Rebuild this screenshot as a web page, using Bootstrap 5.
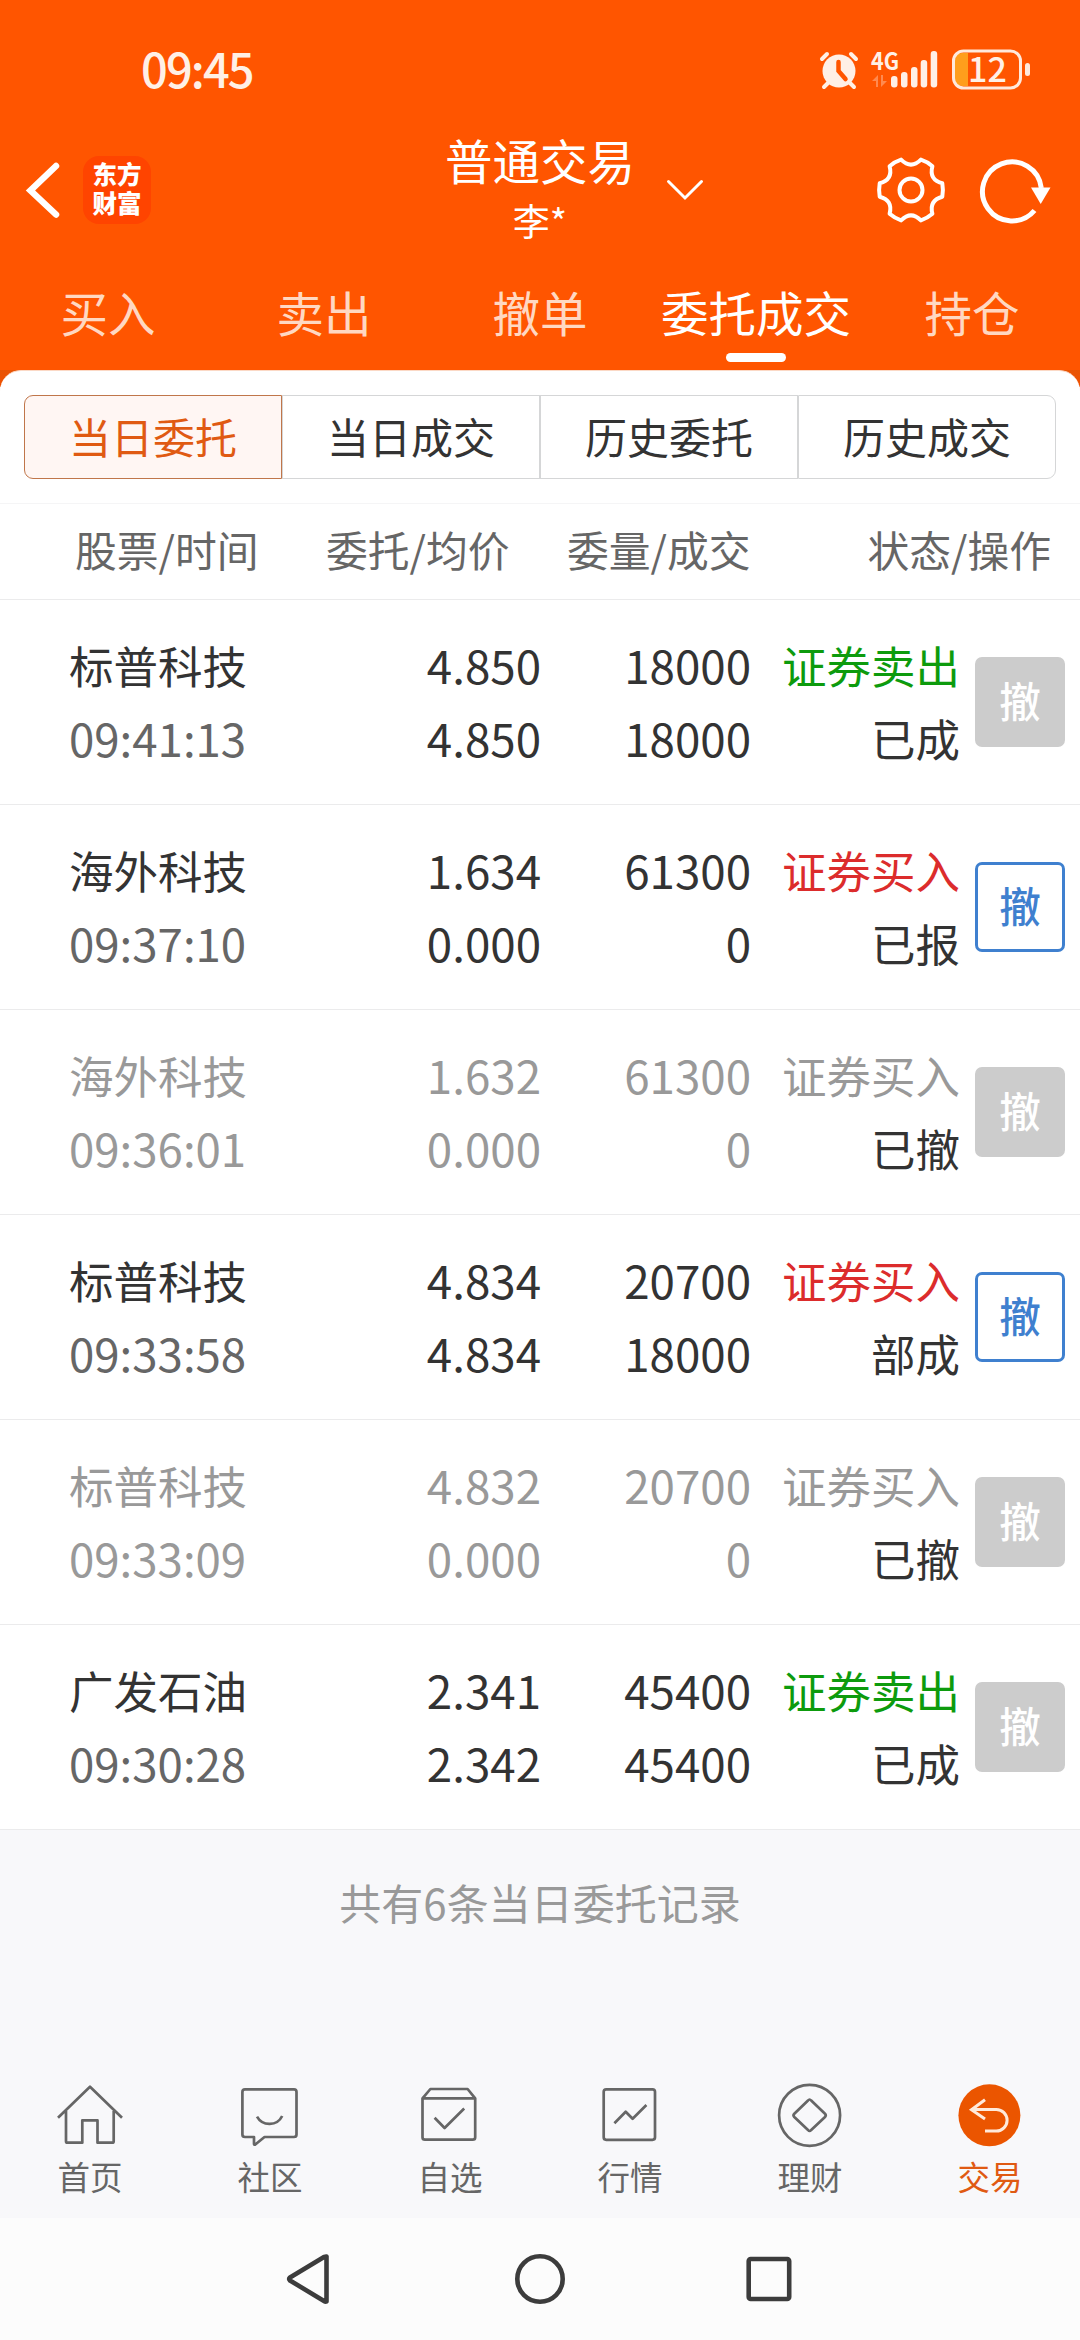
<!DOCTYPE html>
<html lang="zh-CN">
<head>
<meta charset="utf-8">
<meta name="viewport" content="width=device-width, initial-scale=1">
<title>普通交易</title>
<link href="https://cdn.jsdelivr.net/npm/bootstrap@5.3.0/dist/css/bootstrap.min.css" rel="stylesheet">
<style>
  body { width: 1080px; height: 2340px; overflow: hidden; background: #f8f8fa; color: #333;
         font-family: "Noto Sans CJK SC", "Noto Sans", sans-serif; }
  svg { display: block; flex: none; overflow: visible; }
  .app-head { background: #ff5500; height: 370px; color: #fff; }
  .status-bar { height: 140px; padding: 0 49px 0 141px; color: #fff0e6; }
  .clock { font-size: 47px; font-weight: 500; letter-spacing: -1.9px; line-height: 68px; margin-top: -5px; }
  .title-bar { height: 110px; }
  .head-left { width: 440px; padding: 0 0 11px 27px; gap: 24px; }
  .brand { width: 68px; height: 68px; border-radius: 16px; background: #ff4400; font-size: 24.5px;
           line-height: 29px; font-weight: 900; padding-top: 3px; }
  .head-mid { width: 200px; }
  .acct-title { font-size: 47.5px; line-height: 66px; margin-top: -13px; }
  .acct-user { font-size: 37px; line-height: 52px; padding-top: 1px; }
  .head-right { width: 440px; padding: 0 28px 11px 26px; }
  .main-tabs { height: 120px; }
  .main-tabs .nav-link { width: 216px; padding: 0; height: 120px; line-height: 124px; font-size: 47.5px;
           color: #ffd8c2; position: relative; text-align: center; }
  .main-tabs .nav-link.active { color: #fff; }
  .main-tabs .nav-link.active::after { content: ""; position: absolute; left: 78px; top: 103px; width: 60px;
           height: 9px; border-radius: 5px; background: #fff; }
  .sheet-wrap { background: linear-gradient(#e85404, #f05000 17px, #fff 17px); }
  .sheet { background: #fff; border-radius: 21px 21px 0 0; border-top: 1px solid #fbd9c6; }
  .seg { padding: 24px 24px 0; height: 132px; }
  .seg .btn { height: 84px; padding: 0; font-size: 42px; line-height: 76px; padding-bottom: 3px; color: #333; background: #fff;
           border: 1px solid #d5d6d7; border-radius: 0; flex: 1 1 0; }
  .seg .btn:first-child { border-radius: 9px 0 0 9px; }
  .seg .btn:last-child { border-radius: 0 9px 9px 0; }
  .seg .btn.active { background: #fff6f3; color: #e05a12; border-color: #c0764a; }
  .cols-head { height: 97px; border-top: 1px solid #f5f5f6; border-bottom: 1px solid #ebebec; font-size: 41.8px;
           color: #666; line-height: 91px; padding-left: 75px; }
  .h-a { width: 251px; } .h-b { width: 241px; } .h-c { width: 184px; }
  .h-d { width: 300px; }
  .order { height: 205px; border-bottom: 1px solid #ebebec; padding-left: 69px; background: #fff; }
  .order > div { line-height: 73px; font-size: 44.5px; padding-bottom: 3px; }
  .order .num { font-size: 45.7px; }
  .c-name { width: 260px; } .c-price { width: 212px; } .c-vol { width: 210px; } .c-stat { width: 209px; }
  .time-txt { color: #666; font-size: 45.6px; }
  .sell { color: #0d9b0d; } .buy { color: #dc2c2c; }
  .dimmed .c-name, .dimmed .time-txt, .dimmed .num, .dimmed .buy { color: #999; }
  .order .btn { width: 90px; height: 90px; margin-left: 15px; padding: 0 0 3px; border-radius: 7px; font-size: 41.5px;
           font-weight: 500; line-height: 77px; border: 3px solid #3f80cf; color: #3f80cf; background: #fff; }
  .order .btn.off { background: #ccc; border-color: #ccc; color: #fff; }
  .summary { color: #999; font-size: 42px; line-height: 60px; padding-top: 42px; height: 244px; }
  .tabbar { height: 145px; }
  .tabbar a { width: 180px; padding-top: 5px; color: #666; font-size: 32.5px; line-height: 49px; text-decoration: none; }
  .tabbar a.on { color: #e05a12; }
  .tabbar svg { fill: none; stroke: #666; stroke-width: 2.7; stroke-linejoin: round; }
  .sysbar { height: 122px; background: #fcfcfc; }
</style>
</head>
<body class="d-flex flex-column">
<header class="app-head">
  <div class="status-bar d-flex align-items-center justify-content-between">
    <span class="clock">09:45</span>
    <div class="d-flex align-items-center">
      <svg width="40" height="40" viewBox="0 0 40 40" fill="none" stroke="#fff0e6" stroke-linecap="round">
        <circle cx="20" cy="21" r="16.5" fill="#fff0e6" stroke="none"/>
        <path d="M3 9L8 4M37 9L32 4M9 33l-4 4M31 33l4 4" stroke-width="4"/>
        <path d="M19.500 12v9l7 8" stroke="#ff5500" stroke-width="4.500"/>
      </svg>
      <svg width="66" height="40" viewBox="0 0 66 40" style="margin-left:13px" fill="#fff0e6">
        <text x="-1" y="20" font-size="24" font-weight="700" font-family="Noto Sans CJK SC" textLength="28" lengthAdjust="spacingAndGlyphs">4G</text>
        <path d="M0 31l6-6v12H4v-6zM15 31l-6 6V25h2v6z" fill="#ff8a50"/>
        <rect x="19" y="26" width="6.500" height="11.500" rx="3"/><rect x="29" y="22" width="6.500" height="15.500" rx="3"/>
        <rect x="39" y="17" width="6.500" height="20.500" rx="3"/><rect x="48.700" y="10" width="6.500" height="27.500" rx="3"/>
        <rect x="58.700" y="1" width="6.500" height="36.500" rx="3"/>
      </svg>
      <svg width="80" height="42" viewBox="0 0 80 42" style="margin-left:13px">
        <path d="M17 4H11Q4 4 4 11V30Q4 37 11 37H17Z" fill="#ff9e1c"/>
        <rect x="2.500" y="2" width="67" height="37" rx="10" fill="none" stroke="#ffe9dc" stroke-width="3"/>
        <rect x="74" y="14" width="5" height="13" rx="2.500" fill="#ffe9dc"/>
        <text x="17" y="32.500" font-size="34" font-weight="500" font-family="Noto Sans CJK SC" fill="#fff0e6">12</text>
      </svg>
    </div>
  </div>
  <div class="title-bar d-flex">
    <div class="head-left d-flex align-items-center">
      <svg width="32" height="56" viewBox="0 0 32 56" fill="none" stroke="#fff" stroke-width="6.500" stroke-linecap="round"><path d="M29 4L3.500 28.500 29 52.500"/></svg>
      <div class="brand text-center"><div>东方</div><div>财富</div></div>
    </div>
    <div class="head-mid text-center"><div class="acct-title">普通交易</div><div class="acct-user">李*</div></div>
    <div class="head-right d-flex align-items-center">
      <svg width="38" height="22" viewBox="0 0 38 22" fill="none" stroke="#fff" stroke-width="3" stroke-linecap="round"><path d="M2.500 2.500L19 19 35.500 2.500"/></svg>
      <svg class="ms-auto" width="70" height="70" viewBox="-35 -35 70 70" fill="none" stroke="#fff" stroke-width="4" stroke-linejoin="round">
        <path d="M31.300-6.700Q32.500 0 31.300 6.700Q17.800 10.300 21.400 23.800Q16 28.500 9.900 30.400Q0 20.500-9.900 30.400Q-16 28.500-21.400 23.800Q-17.800 10.300-31.300 6.700Q-32.500 0-31.300-6.700Q-17.800-10.300-21.400-23.800Q-16-28.500-9.900-30.400Q0-20.500 9.900-30.400Q16-28.500 21.400-23.800Q17.800-10.300 31.300-6.700Z"/>
        <circle r="11.500"/>
      </svg>
      <svg style="margin-left:31px" width="75" height="70" viewBox="0 0 75 70">
        <path d="M57.500 55.500A29.500 29.500 0 1 1 64.300 33" fill="none" stroke="#fff" stroke-width="5"/>
        <path d="M54 32.500H73.500L63.700 49Z" fill="#fff"/>
      </svg>
    </div>
  </div>
  <nav class="main-tabs nav flex-nowrap">
    <a class="nav-link">买入</a><a class="nav-link">卖出</a><a class="nav-link">撤单</a><a class="nav-link active">委托成交</a><a class="nav-link">持仓</a>
  </nav>
</header>

<main class="sheet-wrap">
  <div class="sheet">
    <div class="seg d-flex">
      <button class="btn active">当日委托</button><button class="btn">当日成交</button><button class="btn">历史委托</button><button class="btn">历史成交</button>
    </div>
    <div class="cols-head d-flex">
      <div class="h-a">股票/时间</div><div class="h-b">委托/均价</div><div class="h-c">委量/成交</div><div class="h-d text-end">状态/操作</div>
    </div>
    <div class="order d-flex align-items-center">
      <div class="c-name">标普科技<div class="time-txt">09:41:13</div></div>
      <div class="c-price num text-end">4.850<br>4.850</div>
      <div class="c-vol num text-end">18000<br>18000</div>
      <div class="c-stat text-end"><span class="sell">证券卖出</span><br>已成</div>
      <button class="btn off">撤</button>
    </div>
    <div class="order d-flex align-items-center">
      <div class="c-name">海外科技<div class="time-txt">09:37:10</div></div>
      <div class="c-price num text-end">1.634<br>0.000</div>
      <div class="c-vol num text-end">61300<br>0</div>
      <div class="c-stat text-end"><span class="buy">证券买入</span><br>已报</div>
      <button class="btn">撤</button>
    </div>
    <div class="order dimmed d-flex align-items-center">
      <div class="c-name">海外科技<div class="time-txt">09:36:01</div></div>
      <div class="c-price num text-end">1.632<br>0.000</div>
      <div class="c-vol num text-end">61300<br>0</div>
      <div class="c-stat text-end"><span class="buy">证券买入</span><br>已撤</div>
      <button class="btn off">撤</button>
    </div>
    <div class="order d-flex align-items-center">
      <div class="c-name">标普科技<div class="time-txt">09:33:58</div></div>
      <div class="c-price num text-end">4.834<br>4.834</div>
      <div class="c-vol num text-end">20700<br>18000</div>
      <div class="c-stat text-end"><span class="buy">证券买入</span><br>部成</div>
      <button class="btn">撤</button>
    </div>
    <div class="order dimmed d-flex align-items-center">
      <div class="c-name">标普科技<div class="time-txt">09:33:09</div></div>
      <div class="c-price num text-end">4.832<br>0.000</div>
      <div class="c-vol num text-end">20700<br>0</div>
      <div class="c-stat text-end"><span class="buy">证券买入</span><br>已撤</div>
      <button class="btn off">撤</button>
    </div>
    <div class="order d-flex align-items-center">
      <div class="c-name">广发石油<div class="time-txt">09:30:28</div></div>
      <div class="c-price num text-end">2.341<br>2.342</div>
      <div class="c-vol num text-end">45400<br>45400</div>
      <div class="c-stat text-end"><span class="sell">证券卖出</span><br>已成</div>
      <button class="btn off">撤</button>
    </div>
  </div>
</main>
<div class="summary text-center">共有6条当日委托记录</div>

<nav class="tabbar d-flex">
  <a class="d-flex flex-column align-items-center"><svg width="72" height="72" viewBox="0 0 72 72"><path d="M4 38.700L36 7.700 68 38.700M12 32V62.200Q12 63.700 13.500 63.700H28.300V41.300H43.500V63.700H58.200Q59.700 63.700 59.700 62.200V32"/></svg><span>首页</span></a>
  <a class="d-flex flex-column align-items-center"><svg width="72" height="72" viewBox="0 0 72 72"><path d="M11 10.300H60Q62.500 10.300 62.500 13V55.500Q62.500 58 60 58H30.500L21 65.700Q20 66 20 64.700V58H11Q8.400 58 8.400 55.500V13Q8.400 10.300 11 10.300Z"/><path d="M23 37.700C28.500 47.500 43 47.500 48.200 37"/></svg><span>社区</span></a>
  <a class="d-flex flex-column align-items-center"><svg width="72" height="72" viewBox="0 0 72 72"><path d="M8.500 19.300L16.400 10H53.600L61.200 19.300V58.200Q61.200 60.700 58.700 60.700H11Q8.500 60.700 8.500 58.200ZM8.500 19.300H61.200M20.600 38.700L30.600 49 50.200 29.500"/></svg><span>自选</span></a>
  <a class="d-flex flex-column align-items-center"><svg width="72" height="72" viewBox="0 0 72 72"><rect x="9.700" y="10.300" width="51.300" height="50.500" rx="2.500"/><path d="M20.400 44.300L31.700 32.700 38.600 39.700 52.400 26"/></svg><span>行情</span></a>
  <a class="d-flex flex-column align-items-center"><svg width="72" height="72" viewBox="0 0 72 72"><circle cx="35.600" cy="36.300" r="30.500"/><path d="M34 21.500Q35.600 19.500 37.200 21.500L51 34.700Q52.500 36.300 51 38L37.200 51Q35.600 53 34 51L20.300 38Q18.700 36.300 20.300 34.700Z"/></svg><span>理财</span></a>
  <a class="on d-flex flex-column align-items-center"><svg width="72" height="72" viewBox="0 0 72 72"><circle cx="35.400" cy="36.300" r="31" style="fill:#eb5500;stroke:none"/><path style="stroke:#ffeadb;stroke-width:3;stroke-linejoin:miter" d="M31 20.700L17.500 30.700 31 40M18 30.500H42.300A10.800 10.800 0 0 1 42.300 52.100H31"/></svg><span>交易</span></a>
</nav>
<footer class="sysbar d-flex justify-content-center align-items-center">
  <svg width="510" height="60" viewBox="285 2249 510 60" fill="none" stroke="#3c3c3c" stroke-width="4.600" stroke-linejoin="round">
    <path d="M326.500 2256.500V2301.500Q325.500 2302 324 2301L290 2280.500Q288.500 2279 290 2277.500L324 2257Z"/>
    <circle cx="540" cy="2279" r="22.700"/>
    <rect x="748.700" y="2259" width="40.500" height="40" rx="2"/>
  </svg>
</footer>
<script src="https://cdn.jsdelivr.net/npm/bootstrap@5.3.0/dist/js/bootstrap.bundle.min.js"></script>
</body>
</html>
